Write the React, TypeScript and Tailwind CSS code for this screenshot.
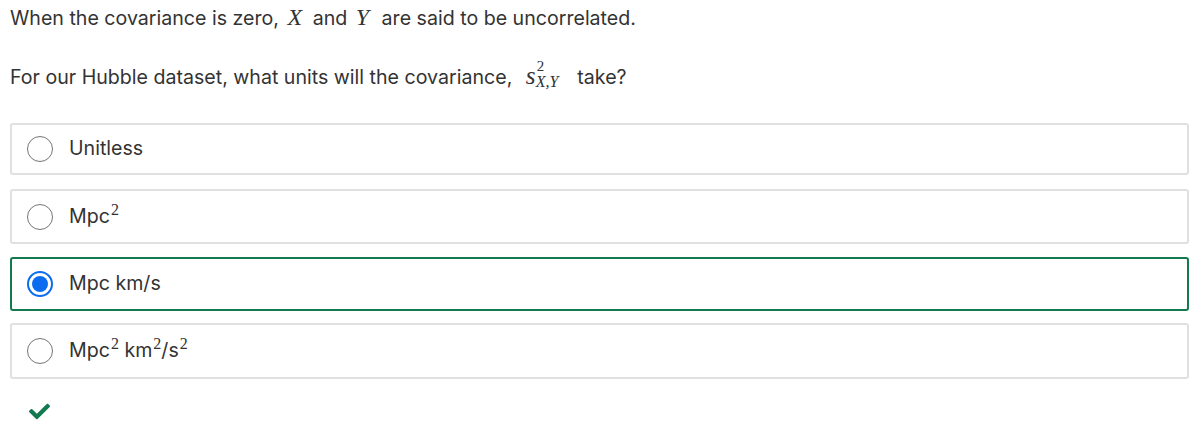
import { FaCheck } from 'react-icons/fa';

const mathFont = "font-['Liberation_Serif',serif]";

const Sq = () => <sup className={`${mathFont} text-[16px] ml-[1px]`}>2</sup>;

interface Option {
    id: string;
    label: React.ReactNode;
    selected?: boolean;
    cls: string;
}

const options: Option[] = [
    { id: 'a', label: 'Unitless', cls: 'h-[52px]' },
    { id: 'b', label: <>Mpc<Sq /></>, cls: 'h-[55px] mt-[14px]' },
    { id: 'c', label: 'Mpc km/s', selected: true, cls: 'h-[54px] mt-[13px]' },
    { id: 'd', label: <>Mpc<Sq /> km<Sq />/s<Sq /></>, cls: 'h-[56px] mt-[12px]' },
];

const Radio = ({ checked }: { checked?: boolean }) =>
    checked ? (
        <div className="w-[26px] h-[26px] rounded-full border-[2px] border-[#0b6cf0] flex items-center justify-center shrink-0">
            <div className="w-[16px] h-[16px] rounded-full bg-[#0b6cf0]" />
        </div>
    ) : (
        <div className="w-[26px] h-[26px] rounded-full border-[1.5px] border-[#757575] shrink-0" />
    );

export default function App() {
    return (
        <div className="w-[1199px] h-[431px] bg-white text-[#333] font-['Inter',sans-serif] text-[19.6px] px-[10px] pt-[3px]">
            <p className="leading-[28px]">
                When the covariance is zero, <i className={`${mathFont} text-[24px] ml-[3px] mr-[5px]`}>X</i> and <i className={`${mathFont} text-[24px] ml-[3px] mr-[7px]`}>Y</i> are said to be uncorrelated.
            </p>
            <p className="mt-[31px] leading-[28px]">
                For our Hubble dataset, what units will the covariance,{' '}
                <span className={`${mathFont} inline-block relative w-[46px] h-[20px] ml-[8px] align-baseline`}>
                    <i className="text-[25px] absolute left-0 bottom-[-6px]">s</i>
                    <span className="text-[15px] leading-none absolute left-[11px] top-[-5px]">2</span>
                    <i className="text-[16px] leading-none absolute left-[10px] top-[10px]">X,Y</i>
                </span>{' '}
                take?
            </p>
            <div className="mt-[32px] flex flex-col">
                {options.map(opt => (
                    <div
                        key={opt.id}
                        className={`flex items-center gap-[16px] pl-[15px] rounded-[3px] border-[2px] ${opt.cls} ${opt.selected ? 'border-[#13794f]' : 'border-[#e0e0e0]'}`}
                    >
                        <Radio checked={opt.selected} />
                        <span className="leading-none">{opt.label}</span>
                    </div>
                ))}
            </div>
            <div className="mt-[22px] pl-[19px] text-[#13794f]">
                <FaCheck size={21} />
            </div>
        </div>
    );
}
